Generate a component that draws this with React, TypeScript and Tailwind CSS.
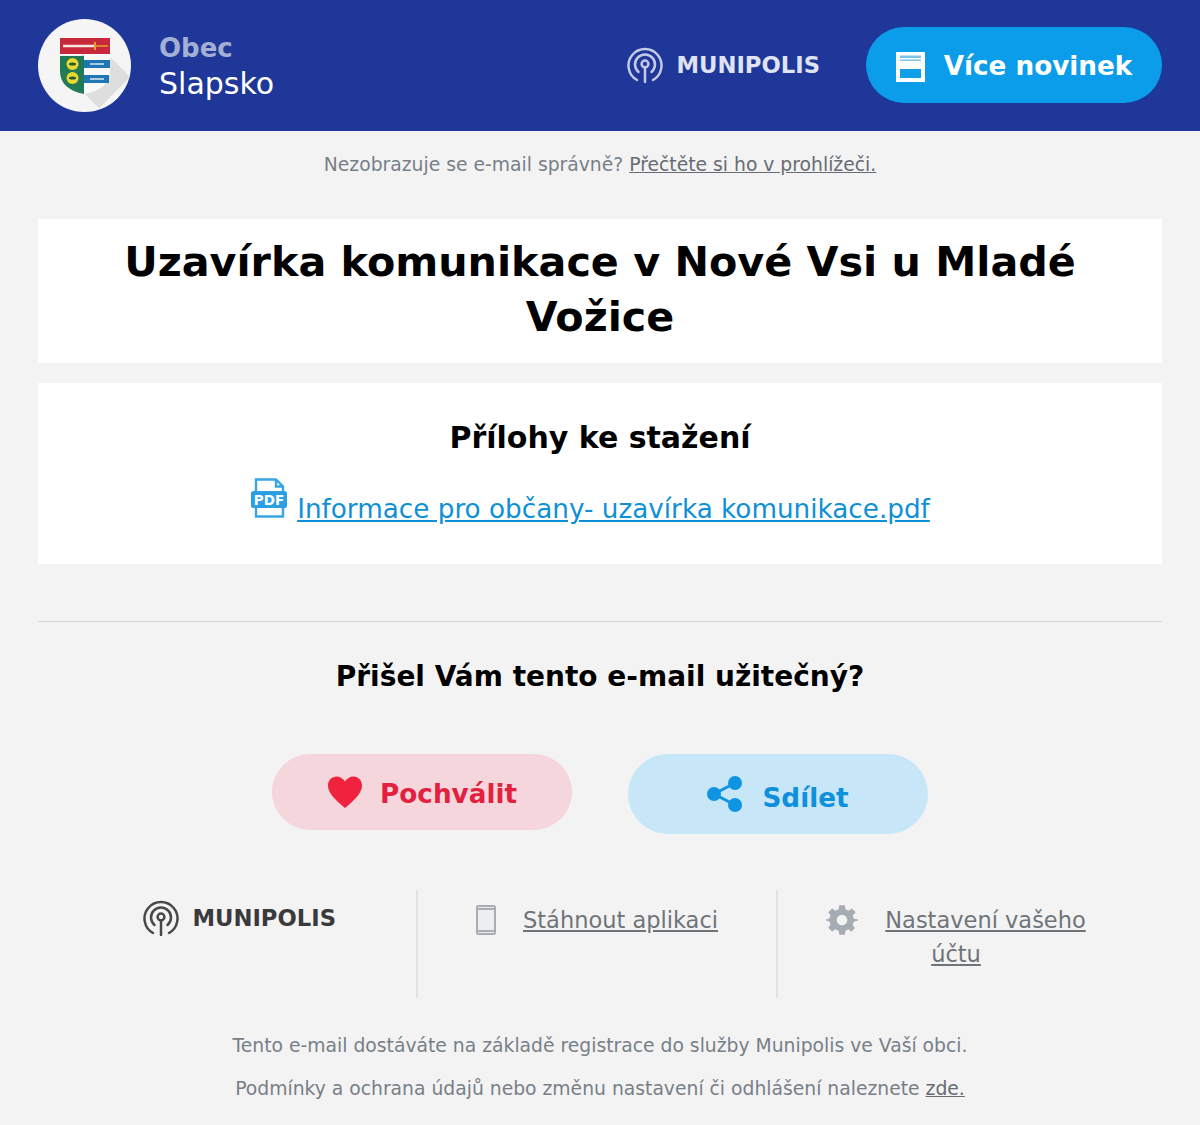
const font = { fontFamily: '"DejaVu Sans", sans-serif' };

function Broadcast({ color, size }: { color: string; size: number }) {
  return (
    <svg width={size} height={size} viewBox="0 0 36 36" fill="none" stroke={color} strokeWidth="2.5" strokeLinecap="round">
      <circle cx="18" cy="17" r="3.4" />
      <path d="M18 20.500V35" />
      <path d="M11.500 25a10 10 0 1 1 13 0" />
      <path d="M10 33a16.500 16.500 0 1 1 16 0" />
    </svg>
  );
}

function Crest() {
  return (
    <svg width="50" height="56" viewBox="0 0 50 56">
      <path d="M0 0h50v16H0z" fill="#c8283c" />
      <path d="M3 8h32" stroke="#f3e6df" strokeWidth="2.4" />
      <path d="M35 4v8" stroke="#e6a02c" strokeWidth="2" />
      <path d="M36 8h12" stroke="#e6a02c" strokeWidth="1.4" />
      <path d="M0 18h24v38C9 53 0 46 0 33z" fill="#217a55" />
      <path d="M24 16h26v17c0 13-9 20-26 23z" fill="#f8f8f8" />
      <path d="M24 22h26v8H24zM24 37h25v8H24z" fill="#1e78b4" />
      <circle cx="12.500" cy="26" r="6" fill="#e8d92c" />
      <circle cx="12.500" cy="40" r="6" fill="#e8d92c" />
      <ellipse cx="12.500" cy="26" rx="3.500" ry="1.500" fill="#26553c" />
      <ellipse cx="12.500" cy="40" rx="3.500" ry="1.500" fill="#26553c" />
      <path d="M30 26h14M30 41h14" stroke="#d9e6ef" strokeWidth="1.500" />
    </svg>
  );
}

function Logo({ color, iconColor }: { color: string; iconColor: string }) {
  return (
    <div className="flex items-center gap-[13px] self-start">
      <Broadcast color={iconColor} size={36} />
      <span className="text-[22.7px] font-bold leading-none" style={{ color }}>
        MUNIPOLIS
      </span>
    </div>
  );
}

function NewsIcon() {
  return (
    <svg width="29" height="30" viewBox="0 0 29 30">
      <path d="M0 0h29v30H0z" fill="#fff" />
      <path d="M4 3.500h21v2.500H4zM4 7.500h21v1.500H4z" fill="#7cc4ee" />
      <path d="M4 17h21v9H4z" fill="#109fe8" />
    </svg>
  );
}

function PdfIcon() {
  return (
    <svg width="36" height="40" viewBox="0 0 36 40">
      <path d="M5 14V1.500h20l7 7V14M5 28v10.500h27V28M25 1.500v7h7" fill="#fff" stroke="#38a6e4" strokeWidth="2.400" />
      <rect x="0" y="13" width="36" height="17" rx="2.500" fill="#2c9fe2" />
      <text x="18" y="26.500" textAnchor="middle" fontSize="13.500" fontWeight="700" fill="#fff" fontFamily="DejaVu Sans">PDF</text>
    </svg>
  );
}

export default function App() {
  return (
    <div className="w-[1200px] h-[1125px] overflow-hidden bg-[#f3f3f3]" style={font}>
      <header className="h-[131px] bg-[#1e3799] flex items-center pl-[38px] pr-[38px]">
        <div className="relative w-[93px] h-[93px] rounded-full bg-[#f5f5f5] overflow-hidden flex items-center justify-center">
          <div className="absolute left-[34px] top-[34px] w-[50px] h-[44px] bg-[#dedede] rotate-45" />
          <div className="relative mt-[1px] flex"><Crest /></div>
        </div>
        <div className="ml-[28px] flex flex-col pt-[4px]">
          <span className="text-[26px] leading-[32px] font-bold text-[#a3afd3]">Obec</span>
          <span className="text-[30px] leading-[40px] text-white">Slapsko</span>
        </div>
        <div className="ml-auto mr-[46px] -mt-[1px]"><Logo color="#dfe3f2" iconColor="#c3cbe6" /></div>
        <a className="w-[296px] h-[76px] -mt-[2px] pt-[4px] rounded-full bg-[#0b9dea] flex items-center justify-center gap-[19px] text-white text-[26.25px] font-bold">
          <NewsIcon />
          <span>Více novinek</span>
        </a>
      </header>

      <p className="text-center text-[18.75px] leading-[24px] text-[#787f87] mt-[22px]">
        Nezobrazuje se e-mail správně? <a className="underline text-[#666c72]">Přečtěte si ho v prohlížeči.</a>
      </p>

      <main className="px-[38px] mt-[42px]">
        <section className="bg-white h-[144px] flex items-center justify-center">
          <h1 className="text-[41.25px] leading-[54.5px] font-bold text-black text-center w-[1040px] -mt-[3px]">
            Uzavírka komunikace v Nové Vsi u Mladé Vožice
          </h1>
        </section>

        <section className="bg-white h-[181px] mt-[20px] flex flex-col items-center pt-[36px]">
          <h2 className="text-[30px] leading-[38px] font-bold text-black">Přílohy ke stažení</h2>
          <div className="flex items-end mt-[21px] mr-[19px]">
            <div className="mb-[11px] mr-[10px]"><PdfIcon /></div>
            <a className="underline text-[26.25px] leading-[40px] text-[#0f90d6]">Informace pro občany- uzavírka komunikace.pdf</a>
          </div>
        </section>

        <div className="h-px bg-[#d4d4d4] mt-[57px]" />

        <h2 className="text-[28px] leading-[38px] font-bold text-black text-center mt-[36px]">Přišel Vám tento e-mail užitečný?</h2>

        <div className="flex justify-center items-start gap-[56px] mt-[58px]">
          <a className="w-[300px] h-[76px] rounded-full bg-[#f5d6dc] flex items-center justify-center gap-[17px] text-[#e3213f] text-[26.25px] font-bold">
            <svg width="36" height="32" viewBox="0 0 36 32"><path d="M18 32C6 22 1 16 1 9.500 1 4 5 0.500 9.500 0.500c3.500 0 6.800 2 8.500 5 1.700-3 5-5 8.500-5C31 0.500 35 4 35 9.500 35 16 30 22 18 32z" fill="#f0233f" /></svg>
            <span className="mt-[6px]">Pochválit</span>
          </a>
          <a className="w-[300px] h-[80px] rounded-full bg-[#c7e7f9] flex items-center justify-center gap-[19px] text-[#0e90dc] text-[26.25px] font-bold">
            <svg width="36" height="36" viewBox="0 0 36 36" fill="#0e94e2"><circle cx="28" cy="7" r="7" /><circle cx="28" cy="29" r="7" /><circle cx="7" cy="18" r="7" /><path d="M7 18 28 7M7 18l21 11" stroke="#0e94e2" strokeWidth="3" /></svg>
            <span className="mt-[9px]">Sdílet</span>
          </a>
        </div>

        <div className="flex mt-[56px] h-[108px] text-[22.5px] leading-[34px] text-[#6f7479]">
          <div className="w-[380px] shrink-0 border-r-2 border-[#e2e2e2] flex justify-end pr-[80px] pt-[10px]">
            <Logo color="#3a3a3c" iconColor="#48484a" />
          </div>
          <div className="w-[360px] shrink-0 border-r-2 border-[#e2e2e2] text-center pt-[13px]">
            <svg className="inline-block align-top mt-[2px] mr-[27px]" width="20" height="30" viewBox="0 0 20 30">
              <rect x="1" y="1" width="18" height="28" rx="1.500" fill="#eceef0" stroke="#a8adb3" strokeWidth="2" />
              <path d="M1 4h18M1 26h18" stroke="#a8adb3" strokeWidth="2" />
            </svg>
            <a className="underline">Stáhnout aplikaci</a>
          </div>
          <div className="w-[356px] shrink-0 text-center pt-[13px] px-[34px]">
            <svg className="inline-block align-top mt-[1px] mr-[27px]" width="32" height="32" viewBox="0 0 24 24" fill="#a5acb4">
              <path fillRule="evenodd" d="M10 1h4l.6 3 2.300 1 2.600-1.700 2.800 2.800L20 8.700l1 2.300 3 .6v.8l-3 .8-1 2.300 1.700 2.600-2.800 2.800L16.900 19l-2.300 1-.6 3h-4l-.6-3-2.300-1-2.600 1.700-2.800-2.800L3.400 15.300l-1-2.300-2.400-.6v-.8l2.400-.6 1-2.300-1.700-2.600 2.800-2.800L7.100 5l2.300-1zM12 8a4 4 0 1 0 0 8 4 4 0 0 0 0-8z" />
            </svg>
            <a className="underline">Nastavení vašeho účtu</a>
          </div>
        </div>

        <div className="text-center text-[18.75px] leading-[43px] text-[#787f87] mt-[26px]">
          <p>Tento e-mail dostáváte na základě registrace do služby Munipolis ve Vaší obci.</p>
          <p>Podmínky a ochrana údajů nebo změnu nastavení či odhlášení naleznete <a className="underline text-[#666c72]">zde.</a></p>
        </div>
      </main>
    </div>
  );
}
